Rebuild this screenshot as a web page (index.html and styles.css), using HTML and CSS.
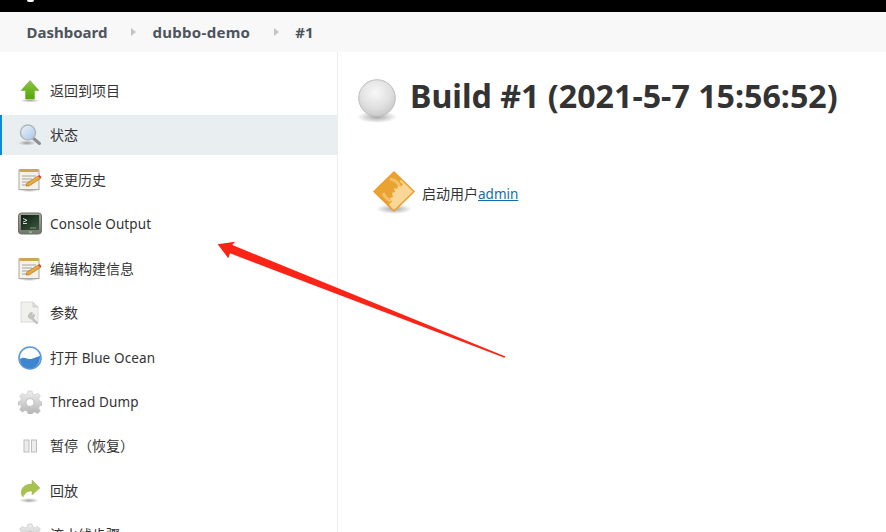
FILE: index.html
```html
<!DOCTYPE html>
<html lang="zh">
<head>
<meta charset="utf-8">
<title>dubbo-demo #1</title>
<link rel="stylesheet" href="styles.css">
</head>
<body>
<svg class="defs" width="0" height="0">
  <defs>
    <radialGradient id="ball" cx="45%" cy="35%" r="70%"><stop offset="0" stop-color="#f8f8f8"/><stop offset=".6" stop-color="#e0e0e0"/><stop offset="1" stop-color="#c6c6c6"/></radialGradient>
    <radialGradient id="shadow"><stop offset="0" stop-color="#000" stop-opacity=".35"/><stop offset="1" stop-color="#000" stop-opacity="0"/></radialGradient>
    <linearGradient id="green" x1="0" y1="0" x2="0" y2="1"><stop offset="0" stop-color="#8fc34a"/><stop offset="1" stop-color="#52a800"/></linearGradient>
    <linearGradient id="lens" x1="0" y1="0" x2="1" y2="1"><stop offset="0" stop-color="#eef4fb"/><stop offset="1" stop-color="#a9c6e8"/></linearGradient>
    <linearGradient id="steel" x1="0" y1="0" x2="0" y2="1"><stop offset="0" stop-color="#eeeeee"/><stop offset="1" stop-color="#b5b5b5"/></linearGradient>
    <linearGradient id="frame" x1="0" y1="0" x2="0" y2="1"><stop offset="0" stop-color="#a4a69e"/><stop offset="1" stop-color="#74766e"/></linearGradient>
    <linearGradient id="screen" x1="0" y1="0" x2="1" y2="1"><stop offset="0" stop-color="#101c14"/><stop offset="1" stop-color="#3c5a40"/></linearGradient>
    <clipPath id="diamond-clip"><path d="M21 1L41 20.500 21 40 1 20.500z"/></clipPath>
    <symbol id="i-notepad" viewBox="0 0 24 24">
      <ellipse cx="11" cy="22" rx="11" ry="2" fill="url(#shadow)"/>
      <rect x="1" y="2" width="20" height="19.500" fill="#f4f2e8" stroke="#a9a9a0"/>
      <rect x="1.500" y="1" width="19" height="3" fill="#c9a94f"/>
      <path d="M4 8h14M4 11h10M4 14h8M4 17h6" stroke="#a5a5a0" fill="none"/>
      <path d="M8 18l1-3L20 8l2.500 2.500L11 18z" fill="#eda83a" stroke="#8a5a1c" stroke-width=".5"/>
      <path d="M20 8l1.500-1 2 2-1 1.500z" fill="#d9453a"/>
    </symbol>
    <symbol id="i-gear" viewBox="0 0 24 24">
      <path fill="url(#steel)" stroke="#c4c4c4" stroke-width=".6" d="M10 1h4l.6 3 2.400 1 2.600-1.700 2.800 2.800L20.700 8.700l1 2.400 2.300.6v3.600l-2.300.6-1 2.400 1.700 2.600-2.800 2.800-2.600-1.700-2.400 1L14 24h-4l-.6-2.500-2.400-1-2.600 1.700-2.800-2.800 1.700-2.600-1-2.400L0 15.300v-3.600l2.300-.6 1-2.400L1.600 6.100l2.800-2.800L7 5l2.400-1z"/>
      <circle cx="12" cy="12.500" r="4" fill="#fff" stroke="#aaa" stroke-width=".6"/>
    </symbol>
  </defs>
</svg>

<div class="topbar"><span class="logo-stub"></span></div>

<nav class="breadcrumbs">
  <a class="crumb">Dashboard</a><span class="caret"></span>
  <a class="crumb crumb-wide">dubbo-demo</a><span class="caret"></span>
  <a class="crumb">#1</a>
</nav>

<div class="layout">
  <aside class="sidebar">
    <a class="task">
      <span class="ico"><svg width="24" height="24" viewBox="0 0 24 24"><ellipse cx="12" cy="21.500" rx="10" ry="2" fill="url(#shadow)"/><path d="M12 1.500L21 11.500H16.500V20H7.500V11.500H3z" fill="url(#green)" stroke="#6fa72c" stroke-width=".5"/></svg></span>
      <span>返回到项目</span>
    </a>
    <a class="task active">
      <span class="ico"><svg width="24" height="24" viewBox="0 0 24 24"><ellipse cx="9" cy="20" rx="9" ry="2.500" fill="url(#shadow)"/><path d="M15 15l6.500 5.500" stroke="#8b8f93" stroke-width="3" stroke-linecap="round"/><circle cx="10" cy="9.500" r="7.500" fill="url(#lens)" stroke="#b4b8bc" stroke-width="1.600"/></svg></span>
      <span>状态</span>
    </a>
    <a class="task">
      <span class="ico"><svg width="24" height="24"><use href="#i-notepad"/></svg></span>
      <span>变更历史</span>
    </a>
    <a class="task">
      <span class="ico"><svg width="24" height="24" viewBox="0 0 24 24"><rect x="0.500" y="1" width="23" height="21" rx="3" fill="url(#frame)" stroke="#6f716a"/><rect x="3" y="3" width="18" height="15" fill="url(#screen)"/><path d="M5 6.500l4 1.800-4 1.800M5 11.500h4" stroke="#e4eee4" fill="none" stroke-width=".9"/><rect x="12" y="15.500" width="6" height="1" fill="#7f9a80"/><rect x="11" y="19.500" width="3" height="1.200" fill="#9fd09f"/></svg></span>
      <span class="latin">Console Output</span>
    </a>
    <a class="task">
      <span class="ico"><svg width="24" height="24"><use href="#i-notepad"/></svg></span>
      <span>编辑构建信息</span>
    </a>
    <a class="task">
      <span class="ico"><svg width="24" height="24" viewBox="0 0 24 24"><path d="M3 1h12l5 5v15H3z" fill="#f0f0ec" stroke="#dadad6"/><path d="M15 1v5h5" fill="#dcdcd8" stroke="#cfcfcb"/><path d="M11 13a3 3 0 0 1 4-1l-1.500 1.500 1 1L16 13a3 3 0 0 1-1 4l5 5-1.500 1-5-5a3 3 0 0 1-2.500-5z" fill="#c4c4c0" stroke="#a0a09c" stroke-width=".4"/></svg></span>
      <span>参数</span>
    </a>
    <a class="task">
      <span class="ico"><svg width="24" height="24" viewBox="0 0 24 24"><circle cx="12" cy="12" r="11" fill="#fff" stroke="#5b9bd5" stroke-width="1.600"/><path d="M2 13c4-3 7 0 10 0s5-2 10-3c.5 7-4 12.500-10 12.500S2 18 2 13z" fill="#3f86d0"/></svg></span>
      <span class="mixed">打开 <span class="latin">Blue Ocean</span></span>
    </a>
    <a class="task">
      <span class="ico"><svg width="24" height="24"><use href="#i-gear"/></svg></span>
      <span class="latin">Thread Dump</span>
    </a>
    <a class="task">
      <span class="ico"><svg width="24" height="24" viewBox="0 0 24 24"><rect x="6" y="6" width="5" height="12" fill="#ececec" stroke="#bdbdbd"/><rect x="13.500" y="6" width="5" height="12" fill="#ececec" stroke="#bdbdbd"/></svg></span>
      <span>暂停（恢复）</span>
    </a>
    <a class="task">
      <span class="ico"><svg width="24" height="24" viewBox="0 0 24 24"><ellipse cx="11" cy="21.500" rx="10" ry="2.500" fill="url(#shadow)"/><path d="M14 1l8 8-8 7v-4c-5 0-7 2-9 6-2-2-2.500-5-1-8 1.500-3 5-5 10-5z" fill="#a8c24f" stroke="#93ad3f" stroke-width=".4"/></svg></span>
      <span>回放</span>
    </a>
    <a class="task">
      <span class="ico"><svg width="24" height="24"><use href="#i-gear"/></svg></span>
      <span>流水线步骤</span>
    </a>
  </aside>

  <main class="main">
    <h1 class="title">
      <svg class="ball" width="42" height="48" viewBox="0 0 42 48"><ellipse cx="21" cy="39" rx="20" ry="6" fill="url(#shadow)"/><circle cx="21" cy="20" r="18.300" fill="url(#ball)" stroke="#bdbdbd"/></svg>
      <span>Build #1 (2021-5-7 15:56:52)</span>
    </h1>
    <div class="cause">
      <svg width="42" height="44" viewBox="0 0 42 44">
        <ellipse cx="21" cy="38" rx="18" ry="5" fill="url(#shadow)"/>
        <path d="M21 1L41 20.500 21 40 1 20.500z" fill="#fbd797"/>
        <g clip-path="url(#diamond-clip)">
          <path d="M0 0H33L31 9l-3-1-1 3 3 2-2 3-3-1-1 3-3-1 1 4-3 1 1 4-3 1 2 4-3 2 2 4-3 3L0 30z" fill="#e9a331"/>
          <path d="M17 8c5 1 9 4 10 9M10 22c2 4 5 7 8 8" fill="none" stroke="#fbd797" stroke-width="3" opacity=".55"/>
        </g>
        <path d="M21 1L41 20.500 21 40 1 20.500z" fill="none" stroke="#ef9a22" stroke-width="1.400"/>
      </svg>
      <span class="cause-text">启动用户<a class="link">admin</a></span>
    </div>
  </main>
</div>

<svg class="annotation" width="886" height="532" viewBox="0 0 886 532"><polygon points="217.700,244.300 235,241.700 232.300,245 505.500,356.600 504.500,357.700 230,253.300 228.300,258.300" fill="#fb2417"/></svg>
</body>
</html>
```

FILE: styles.css
```css
* { box-sizing: border-box; }
html, body { margin: 0; height: 100%; }
body {
  height: 532px;
  overflow: hidden;
  position: relative;
  background: #fff;
  color: #333;
  font-family: "Noto Sans", "Noto Sans CJK SC", sans-serif;
  font-size: 14px;
}
.defs { position: absolute; }
.topbar { height: 12px; background: #000; position: relative; overflow: hidden; }
.logo-stub { display: block; width: 7px; height: 2px; margin-left: 27px; background: #fff; border-radius: 0 0 3px 3px; }

.breadcrumbs {
  height: 40px;
  background: #f8f8f8;
  display: flex;
  align-items: center;
  padding-left: 26.500px;
  font-size: 15px;
  font-weight: 700;
  color: #4d545d;
}
.crumb { line-height: 40px; }
.crumb-wide { letter-spacing: .3px; }
.caret {
  width: 0; height: 0;
  margin: 0 16px 0 24px;
  border-left: 5px solid #c4c4c4;
  border-top: 4.500px solid transparent;
  border-bottom: 4.500px solid transparent;
}

.layout { display: flex; height: 480px; }
.sidebar {
  width: 338px;
  flex: none;
  padding-top: 19px;
  border-right: 1px solid #e9eef0;
  display: flex;
  flex-direction: column;
  gap: 4.430px;
  overflow: hidden;
}
.task {
  flex: none;
  height: 40px;
  display: flex;
  align-items: center;
  gap: 8px;
  padding-left: 18px;
  padding-bottom: 2px;
  color: #333;
  font-weight: 400;
}
.task .ico { margin-top: 2px; }
.task > .latin { margin-top: 2px; }
.task > .mixed { margin-top: 1px; }
.latin { font-size: 13.500px; font-weight: 400; letter-spacing: .12px; }
.task.active {
  background: #e9eef0;
  box-shadow: inset 2px 0 0 #0b8ad6;
}
.ico { width: 24px; height: 24px; flex: none; display: block; }
.ico svg { display: block; }

.main { flex: 1; padding: 22px 0 0 18px; }
.title {
  margin: 0;
  display: flex;
  align-items: flex-start;
  gap: 12px;
  font-size: 32.200px;
  font-weight: 700;
  line-height: 44px;
  color: #333;
  white-space: nowrap;
}
.ball { flex: none; margin-top: 4px; }
.cause {
  margin: 45px 0 0 17px;
  display: flex;
  align-items: flex-start;
  gap: 7px;
  height: 44px;
}
.cause-text { line-height: 44px; margin-top: 1px; }
.link { color: #0f6fa8; text-decoration: underline; font-size: 13.500px; font-weight: 400; }
.annotation { position: absolute; left: 0; top: 0; pointer-events: none; }
```
